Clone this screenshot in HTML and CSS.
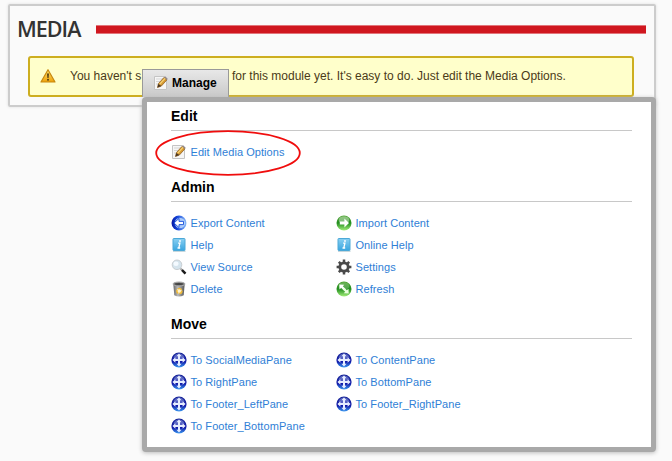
FILE: index.html
```
<!DOCTYPE html>
<html lang="en">
<head>
<meta charset="utf-8">
<title>Media</title>
<link rel="stylesheet" href="styles.css">
</head>
<body>
<svg class="defs" width="0" height="0">
  <defs>
    <linearGradient id="g-blue" x2="1" y2="0"><stop stop-color="#0516a0"/><stop offset=".4" stop-color="#1547dc"/><stop offset="1" stop-color="#8dbdf8"/></linearGradient>
    <linearGradient id="g-green" x2="0" y2="1"><stop stop-color="#4ca32f"/><stop offset=".5" stop-color="#238e20"/><stop offset="1" stop-color="#a2ee79"/></linearGradient>
    <linearGradient id="g-navy" x2="0" y2="1"><stop stop-color="#152394"/><stop offset=".6" stop-color="#1018a8"/><stop offset="1" stop-color="#3d9df2"/></linearGradient>
    <linearGradient id="g-help" x2="0" y2="1"><stop stop-color="#8ad0f2"/><stop offset="1" stop-color="#39a5df"/></linearGradient>
    <linearGradient id="g-can" x2="1" y2="0"><stop stop-color="#666"/><stop offset=".4" stop-color="#bbb"/><stop offset="1" stop-color="#555"/></linearGradient>
    <linearGradient id="g-warn" x2="0" y2="1"><stop stop-color="#ffe36a"/><stop offset="1" stop-color="#eea10b"/></linearGradient>
    <symbol id="edit" viewBox="0 0 16 16">
      <path d="M1.5 1.5h10l2 2v11h-12z" fill="#f6f6f6" stroke="#c4c4c4"/>
      <path d="M3 4h7M3 6.5h5M3 9h3" stroke="#d5d5d5"/>
      <path d="M4.5 12.5l1-4 5.6-6.2 2.8 2.6L8.4 11z" fill="#d79a32" stroke="#86581c" stroke-width=".7"/>
      <path d="M6.7 9.2l5.6-6" stroke="#f8d577" stroke-width="1.2"/>
      <path d="M11.1 2.3l1-1 2.6 2.4-.8 1.2z" fill="#92888a"/>
      <path d="M4.5 12.5l.8-3.5 3.1 2z" fill="#4b3825"/>
    </symbol>
    <symbol id="export" viewBox="0 0 16 16">
      <circle cx="8" cy="8" r="7.5" fill="url(#g-blue)"/>
      <circle cx="8.9" cy="8" r="5.2" fill="#c5e0fd" opacity=".8"/>
      <path d="M3 8l5-4.6v3h4.5v3.2H8v3z" fill="#fff" stroke="#174fda" stroke-width=".9"/>
    </symbol>
    <symbol id="import" viewBox="0 0 16 16">
      <circle cx="8" cy="8" r="7.5" fill="url(#g-green)"/>
      <ellipse cx="8" cy="5" rx="5.3" ry="3.8" fill="#fff" opacity=".4"/>
      <path d="M13 8L8.4 3.6v2.8H3.8v3.2h4.6v2.8z" fill="#fff"/>
    </symbol>
    <symbol id="help" viewBox="0 0 16 16">
      <path d="M2 14.2h12.5" stroke="#c5d5dc" stroke-width="1.5"/>
      <rect x="2" y="1.5" width="12" height="12" rx=".7" fill="url(#g-help)" stroke="#4ca9d8"/>
      <path d="M7.1 6.2h1.8L7.8 11M6.5 11h2.7" fill="none" stroke="#fff" stroke-width="1.3"/>
      <circle cx="9" cy="4" r=".9" fill="#fff"/>
    </symbol>
    <symbol id="view" viewBox="0 0 16 16">
      <path d="M9.2 9.3l5.1 5" stroke="#aaa" stroke-width="2"/>
      <path d="M11 11l3.5 3.6" stroke="#1b1b1b" stroke-width="2.5"/>
      <circle cx="6" cy="5.8" r="4.8" fill="#d5e4ed" stroke="#c9ced2"/>
      <ellipse cx="5" cy="4.7" rx="2.6" ry="2.2" fill="#f4faff"/>
    </symbol>
    <symbol id="settings" viewBox="0 0 16 16">
      <circle cx="8" cy="8" r="4.2" fill="none" stroke="#4a4a4a" stroke-width="2.8"/>
      <path d="M8 .6v3M8 12.4v3M.6 8h3M12.4 8h3M2.8 2.8l2 2M11.2 11.2l2 2M2.8 13.2l2-2M11.2 4.8l2-2" stroke="#4a4a4a" stroke-width="2.5"/>
    </symbol>
    <symbol id="delete" viewBox="0 0 16 16">
      <path d="M2.3 3h11.4l-1 11.2q-4.7 2.4-9.4 0z" fill="url(#g-can)"/>
      <ellipse cx="8" cy="3" rx="6" ry="2" fill="#777" stroke="#aaa"/>
      <ellipse cx="8" cy="3" rx="4.1" ry="1" fill="#444"/>
      <circle cx="8.3" cy="10" r="2.5" fill="#fff3cf" stroke="#f0bb38" stroke-width="1.6" stroke-dasharray="4 1"/>
    </symbol>
    <symbol id="refresh" viewBox="0 0 16 16">
      <circle cx="8" cy="8" r="7.5" fill="url(#g-green)"/>
      <ellipse cx="8" cy="5" rx="5.3" ry="3.8" fill="#fff" opacity=".2"/>
      <path d="M3.3 3.5l5 .2-1.5 1.5 3 3-1.6 1.6-3-3-1.7 1.6z" fill="#fff"/>
      <path d="M12.7 12.5l-5-.2 1.5-1.5-2.5-2.6 1.6-1.5 2.5 2.5 1.7-1.5z" fill="#eaffdd"/>
    </symbol>
    <symbol id="move" viewBox="0 0 16 16">
      <circle cx="8" cy="8" r="7.6" fill="url(#g-navy)"/>
      <path d="M2.5 5.5Q4 1.5 8 1.5t5.5 4L12 7H4z" fill="#8e9be0" opacity=".55"/>
      <path d="M8 1.5l2.6 2.7H9v2.7h2.6V5.2L14.6 8l-3 2.8V9.1H9v2.7h1.6L8 14.5l-2.6-2.7H7V9.1H4.4v1.7L1.4 8l3-2.8v1.7H7V4.2H5.4z" fill="#e6edff"/>
    </symbol>
    <symbol id="warning" viewBox="0 0 16 16">
      <path d="M8 1.7L15 14H1z" fill="url(#g-warn)" stroke="#c7880f" stroke-width="1.2" stroke-linejoin="round"/>
      <path d="M7 5.5h2l-.4 4.5H7.4z" fill="#574214"/><circle cx="8" cy="11.8" r="1" fill="#574214"/>
    </symbol>
  </defs>
</svg>
<section class="module">
  <header class="module-head">
    <h1>MEDIA</h1>
    <div class="rule"></div>
  </header>
  <div class="warning">
    <svg class="icon"><use href="#warning"/></svg>
    <p><span class="lead">You haven't s</span><span class="rest">for this module yet. It's easy to do. Just edit the Media Options.</span></p>
  </div>
</section>
<div class="manage">
  <div class="tab"><svg class="icon"><use href="#edit"/></svg><span>Manage</span></div>
  <div class="menu">
    <h2>Edit</h2>
    <div class="links">
      <a class="current"><svg class="icon"><use href="#edit"/></svg><span>Edit Media Options</span><svg class="ring" viewBox="0 0 146 46"><ellipse cx="73" cy="23" rx="71.8" ry="21.8"/></svg></a>
    </div>
    <h2>Admin</h2>
    <div class="links">
      <a><svg class="icon"><use href="#export"/></svg><span>Export Content</span></a>
      <a><svg class="icon"><use href="#import"/></svg><span>Import Content</span></a>
      <a><svg class="icon"><use href="#help"/></svg><span>Help</span></a>
      <a><svg class="icon"><use href="#help"/></svg><span>Online Help</span></a>
      <a><svg class="icon"><use href="#view"/></svg><span>View Source</span></a>
      <a><svg class="icon"><use href="#settings"/></svg><span>Settings</span></a>
      <a><svg class="icon"><use href="#delete"/></svg><span>Delete</span></a>
      <a><svg class="icon"><use href="#refresh"/></svg><span>Refresh</span></a>
    </div>
    <h2>Move</h2>
    <div class="links">
      <a><svg class="icon"><use href="#move"/></svg><span>To SocialMediaPane</span></a>
      <a><svg class="icon"><use href="#move"/></svg><span>To ContentPane</span></a>
      <a><svg class="icon"><use href="#move"/></svg><span>To RightPane</span></a>
      <a><svg class="icon"><use href="#move"/></svg><span>To BottomPane</span></a>
      <a><svg class="icon"><use href="#move"/></svg><span>To Footer_LeftPane</span></a>
      <a><svg class="icon"><use href="#move"/></svg><span>To Footer_RightPane</span></a>
      <a><svg class="icon"><use href="#move"/></svg><span>To Footer_BottomPane</span></a>
    </div>
  </div>
</div>
</body>
</html>
```
FILE: styles.css
```
* { box-sizing: border-box; }
body {
  margin: 0;
  padding: 4px 16px 0 8px;
  height: 461px;
  overflow: hidden;
  background: #fafafa;
  font-family: "Liberation Sans", Arial, sans-serif;
}
.defs { position: absolute; }
.icon { width: 16px; height: 16px; flex: none; }
.module {
  height: 103px;
  padding: 10px 8px 0 7px;
  border: 2px solid #ccc;
  border-radius: 2px;
  box-shadow: 0 0 3px #ddd;
}
.module-head { display: flex; align-items: center; height: 26px; }
h1 {
  margin: 0;
  width: 79px;
  font: 600 21.5px/26px "Open Sans", sans-serif;
  letter-spacing: -1px;
  color: #333;
}
.rule {
  flex: 1;
  height: 9px;
  border: solid #e2747a;
  border-width: 1px 0;
  background: #d0171f;
}
.warning {
  display: flex;
  align-items: center;
  height: 41px;
  margin: 14px 12px 0 11px;
  padding-left: 10px;
  border: 2px solid #cdae20;
  border-radius: 3px;
  background: #ffffcb;
}
.warning .icon { margin-bottom: 1px; }
.warning p {
  display: flex;
  margin: 0 0 2px 14px;
  font-size: 12px;
  line-height: 16px;
  white-space: nowrap;
  color: #4b3a18;
}
.lead { width: 162px; }
.manage { position: absolute; left: 142px; top: 69px; width: 514px; }
.tab {
  display: flex;
  align-items: center;
  gap: 3px;
  width: 87px;
  height: 28px;
  padding: 0 0 1px 10px;
  border: 1px solid #999;
  border-bottom: 0;
  background: linear-gradient(#e8e8e8, #c9c9c9);
  font-size: 12px;
  font-weight: bold;
  color: #000;
}
.menu {
  height: 355px;
  padding: 5px 19px 0 24px;
  border: 5px solid #a9a9a9;
  border-radius: 4px;
  box-shadow: 0 1px 4px #bbb;
  background: #fff;
}
h2 {
  margin: 0 0 10px;
  height: 24px;
  border-bottom: 1px solid #c8c8c8;
  font-size: 14px;
  line-height: 18px;
  color: #000;
}
.links {
  display: grid;
  grid-template-columns: 165px 165px;
  grid-auto-rows: 22px;
  margin-bottom: 15px;
}
.links a {
  position: relative;
  display: flex;
  align-items: center;
  gap: 3.5px;
  font-size: 11px;
  letter-spacing: 0.06px;
  white-space: nowrap;
  color: #2f80d6;
}
.ring {
  position: absolute;
  left: -16px;
  top: -11px;
  width: 146px;
  height: 46px;
  fill: none;
  stroke: #f00d0d;
  stroke-width: 1.8;
}
```
